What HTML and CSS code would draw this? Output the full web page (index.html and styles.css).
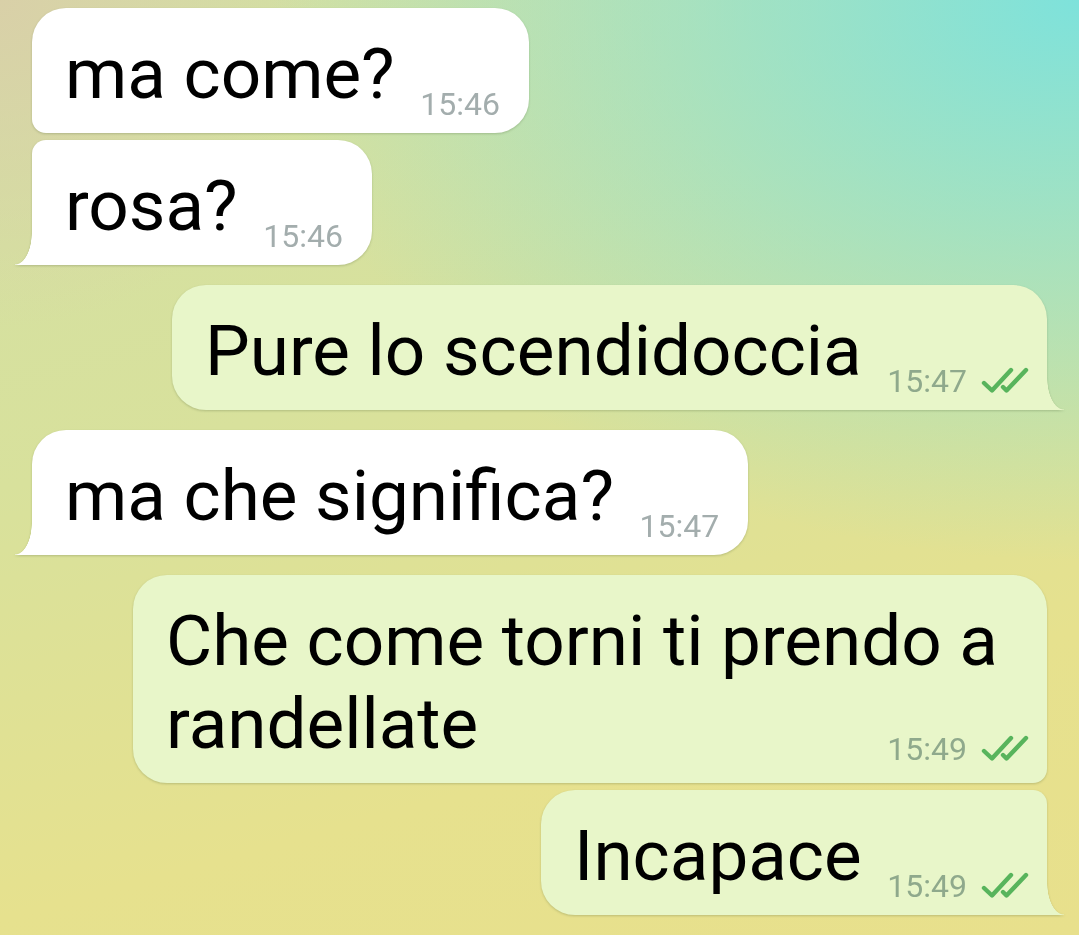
FILE: index.html
```html
<!DOCTYPE html>
<html lang="it">
<head>
  <meta charset="UTF-8" />
  <meta name="viewport" content="width=device-width, initial-scale=1.0" />
  <title>Chat</title>
  <link rel="stylesheet" href="styles.css">
</head>
<body>
  <div class="chat">
    <div class="bubble in group-start">
      <span class="text">ma come?</span>
      <span class="meta"><span class="time">15:46</span></span>
    </div>
    <div class="bubble in group-end tail same">
      <span class="text">rosa?</span>
      <span class="meta"><span class="time">15:46</span></span>
    </div>

    <div class="bubble out tail">
      <span class="text">Pure lo scendidoccia</span>
      <span class="meta">
        <span class="time">15:47</span>
        <svg class="check" width="46" height="26" viewBox="0 0 46 26"><path d="M2 17 L10 24.5 L29 4 M21 21 L24.5 24.5 L44 4" /></svg>
      </span>
    </div>

    <div class="bubble in tail">
      <span class="text">ma che significa?</span>
      <span class="meta"><span class="time">15:47</span></span>
    </div>

    <div class="bubble out group-start">
      <span class="text">Che come torni ti prendo a randellate</span>
      <span class="meta end">
        <span class="time">15:49</span>
        <svg class="check" width="46" height="26" viewBox="0 0 46 26"><path d="M2 17 L10 24.5 L29 4 M21 21 L24.5 24.5 L44 4" /></svg>
      </span>
    </div>
    <div class="bubble out group-end tail same">
      <span class="text">Incapace</span>
      <span class="meta">
        <span class="time">15:49</span>
        <svg class="check" width="46" height="26" viewBox="0 0 46 26"><path d="M2 17 L10 24.5 L29 4 M21 21 L24.5 24.5 L44 4" /></svg>
      </span>
    </div>
  </div>
</body>
</html>
```

FILE: styles.css
```css
:root {
  --in-bg: #ffffff;
  --out-bg: #e8f6c9;
  --text-color: #000000;
  --in-time: #a3adad;
  --out-time: #8fa98c;
  --check: #58b45c;
  --font-family: 'Roboto', 'Noto Sans', sans-serif;
}

* {
  box-sizing: border-box;
  margin: 0;
  padding: 0;
}

html, body {
  width: 100%;
  height: 100%;
  overflow: hidden;
}

body {
  font-family: var(--font-family);
  color: var(--text-color);
  background:
    radial-gradient(ellipse 75% 60% at 100% 0%, #7ee2db 0%, rgba(126, 226, 219, 0.55) 45%, rgba(126, 226, 219, 0) 100%),
    radial-gradient(ellipse 30% 35% at 0% 0%, #d9d0a8 0%, rgba(217, 208, 168, 0) 100%),
    linear-gradient(165deg, #d2e0a4 0%, #d8e19c 40%, #e6e18e 75%, #e8e08c 100%);
}

.chat {
  display: flex;
  flex-direction: column;
  padding: 8px 32px;
}

.bubble {
  position: relative;
  max-width: 914px;
  padding: 24px 19px 18px 33px;
  border-radius: 34px;
  font-size: 71px;
  line-height: 83px;
  margin-top: 20px;
  display: flow-root;
  filter: drop-shadow(0 1px 1px rgba(60, 80, 40, 0.25));
}

.bubble:first-child {
  margin-top: 0;
}

.bubble.same {
  margin-top: 7px;
}

.bubble.in {
  align-self: flex-start;
  background: var(--in-bg);
  padding-right: 29px;
}

.bubble.out {
  align-self: flex-end;
  background: var(--out-bg);
}

/* angoli dei gruppi */
.bubble.in.group-start { border-bottom-left-radius: 14px; }
.bubble.in.group-end { border-top-left-radius: 14px; }
.bubble.out.group-start { border-bottom-right-radius: 14px; }
.bubble.out.group-end { border-top-right-radius: 14px; }

/* codina */
.bubble.tail::before {
  content: "";
  position: absolute;
  bottom: 0;
  width: 34px;
  height: 32px;
}

.bubble.in.tail {
  border-bottom-left-radius: 0;
}

.bubble.in.tail::before {
  left: -17px;
  background: var(--in-bg);
  -webkit-mask: radial-gradient(17px 32px at 0 0, transparent 97%, #000 100%);
  mask: radial-gradient(17px 32px at 0 0, transparent 97%, #000 100%);
}

.bubble.out.tail {
  border-bottom-right-radius: 0;
}

.bubble.out.tail::before {
  right: -17px;
  background: var(--out-bg);
  -webkit-mask: radial-gradient(17px 32px at 100% 0, transparent 97%, #000 100%);
  mask: radial-gradient(17px 32px at 100% 0, transparent 97%, #000 100%);
}

.meta {
  display: inline-flex;
  align-items: baseline;
  gap: 15px;
  margin-left: 8px;
  vertical-align: -17px;
  font-size: 32px;
  line-height: 20px;
}

.meta.end {
  float: right;
  margin-top: 52px;
}

.in .time {
  color: var(--in-time);
}

.out .time {
  color: var(--out-time);
}

.check {
  display: block;
  overflow: visible;
}

.check path {
  fill: none;
  stroke: var(--check);
  stroke-width: 4.4;
  stroke-linecap: round;
  stroke-linejoin: round;
}
```
